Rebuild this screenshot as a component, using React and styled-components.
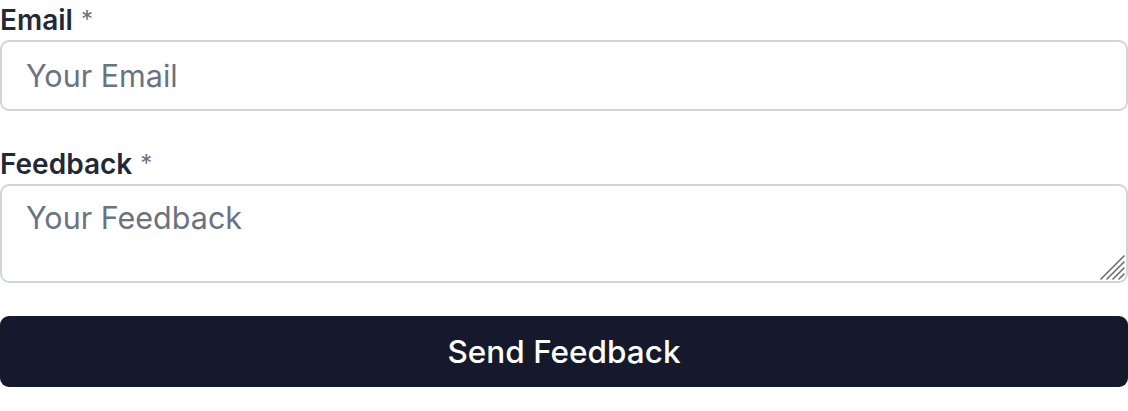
import React from 'react';
import styled, { createGlobalStyle } from 'styled-components';

const GlobalStyle = createGlobalStyle`
    html, body {
        margin: 0;
        padding: 0;
        background: #ffffff;
    }

    body {
        font-family: Inter, "Noto Sans", "Liberation Sans", sans-serif;
        -webkit-font-smoothing: antialiased;
    }
`;

const Form = styled.form`
    width: 1128px;
    display: flex;
    flex-direction: column;
    gap: 33px;
`;

const Field = styled.div`
    display: flex;
    flex-direction: column;
`;

const Label = styled.label`
    height: 40px;
    display: flex;
    align-items: center;
    gap: 8px;
    font-size: 28px;
    font-weight: 600;
    color: #1f2937;
    line-height: 40px;

    span {
        color: #6b7280;
        font-weight: 400;
        font-size: 24px;
    }
`;

const fieldBase = `
    box-sizing: border-box;
    width: 100%;
    border: 2px solid #d1d5db;
    border-radius: 9px;
    padding: 0 24px;
    font-family: Inter, "Noto Sans", "Liberation Sans", sans-serif;
    font-size: 30.5px;
    color: #111827;
    background: #ffffff;
    outline: none;

    &::placeholder {
        color: #6b7280;
        opacity: 1;
    }
`;

const Input = styled.input`
    ${fieldBase}
    height: 71px;
`;

const AreaWrap = styled.div`
    position: relative;
`;

const TextArea = styled.textarea`
    ${fieldBase}
    height: 99px;
    padding-top: 12px;
    line-height: 40px;
    resize: none;
    display: block;
`;

const Grip = styled.svg`
    position: absolute;
    right: 2px;
    bottom: 2px;
    width: 28px;
    height: 28px;
    pointer-events: none;
`;

const Submit = styled.button`
    height: 71px;
    width: 100%;
    border: none;
    border-radius: 9px;
    background: #141a2b;
    color: #ffffff;
    font-family: Inter, "Noto Sans", "Liberation Sans", sans-serif;
    font-size: 31.5px;
    font-weight: 500;
    cursor: pointer;
`;

export default function App() {
    return (
        <>
            <GlobalStyle />
            <Form onSubmit={e => e.preventDefault()}>
                <Field>
                    <Label htmlFor="email">Email <span>*</span></Label>
                    <Input id="email" type="email" placeholder="Your Email" />
                </Field>
                <Field>
                    <Label htmlFor="feedback">Feedback <span>*</span></Label>
                    <AreaWrap>
                        <TextArea id="feedback" placeholder="Your Feedback" />
                        <Grip viewBox="0 0 28 28">
                            <g stroke="#6b6b6b" strokeWidth="1.6" strokeLinecap="round">
                                <line x1="3" y1="26" x2="26" y2="3" />
                                <line x1="9" y1="26" x2="26" y2="9" />
                                <line x1="15" y1="26" x2="26" y2="15" />
                                <line x1="21" y1="26" x2="26" y2="21" />
                            </g>
                        </Grip>
                    </AreaWrap>
                </Field>
                <Submit type="submit">Send Feedback</Submit>
            </Form>
        </>
    );
}
